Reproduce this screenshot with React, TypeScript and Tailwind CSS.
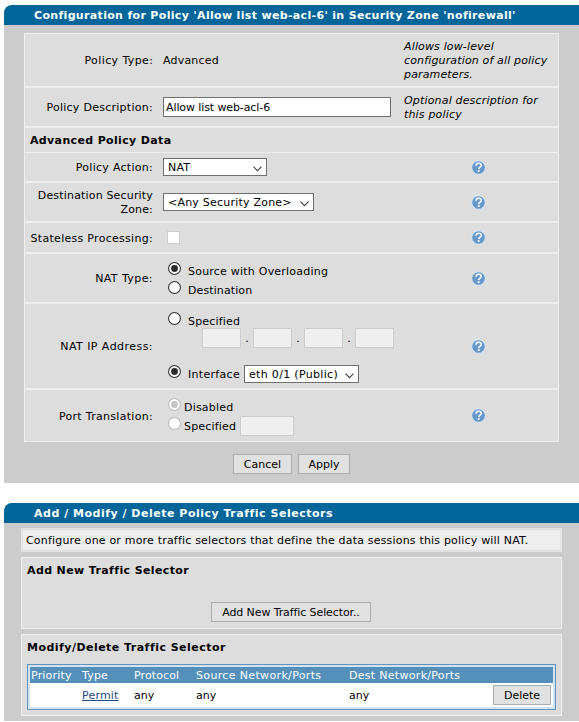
import type { ReactNode } from "react";

function Header({ children, spacing }: { children: ReactNode; spacing: string }) {
  return (
    <div className="h-5 rounded-tl-[8px] bg-[#006699] pl-[30px] text-[11px] leading-[21px] font-bold text-white">
      <span className={spacing}>{children}</span>
    </div>
  );
}

function HelpIcon() {
  return (
    <svg className="ml-[68px] block" width="15" height="15" viewBox="0 0 15 15" aria-hidden="true">
      <circle cx="7.5" cy="7.5" r="7.2" fill="#d3e6f6" />
      <circle cx="7.5" cy="7.5" r="6.3" fill="#6698ca" />
      <path d="M5 5.7C5.1 4.1 6.2 3.2 7.7 3.2c1.5 0 2.6.8 2.6 2.1 0 1.9-2.5 1.9-2.6 3.8" fill="none" stroke="#fff" strokeWidth="1.6" />
      <rect x="6.8" y="10.2" width="1.8" height="1.8" fill="#fff" />
    </svg>
  );
}

function Radio({ checked = false, disabled = false }: { checked?: boolean; disabled?: boolean }) {
  const color = disabled ? "#bcbcbc" : "#333333";
  return (
    <svg className="ml-[5px] block shrink-0" width="13" height="13" viewBox="0 0 13 13" aria-hidden="true">
      <circle cx="6.5" cy="6.5" r="5.95" fill="#fff" stroke={color} strokeWidth="1.1" />
      {checked && <circle cx="6.5" cy="6.5" r="3.4" fill={disabled ? "#c4c4c4" : "#2b2b2b"} />}
    </svg>
  );
}

function Select({ children, width, spacing }: { children: ReactNode; width: string; spacing: string }) {
  return (
    <div className={`flex h-[18px] items-center justify-between border border-[#6f6f6f] bg-white pr-[4px] pl-[4px] leading-4 ${width}`}>
      <span className={`pt-[2px] ${spacing}`}>{children}</span>
      <svg className="mt-[3px]" width="9" height="6" viewBox="0 0 9 6" aria-hidden="true">
        <path d="M.5.7 4.5 4.7 8.5.7" fill="none" stroke="#444" strokeWidth="1.1" />
      </svg>
    </div>
  );
}

function Button({ children, width }: { children: ReactNode; width: string }) {
  return (
    <button className={`flex h-5 items-center justify-center border border-[#adadad] bg-[#e1e1e1] pt-[2px] text-[11px] leading-[18px] text-black ${width}`}>
      {children}
    </button>
  );
}

function Row({ label, height, spacing, help, children }: { label: string; height: string; spacing: string; help?: ReactNode; children: ReactNode }) {
  return (
    <div className={`flex items-center border-b-2 border-[#eeeeee] last:border-b-0 ${height}`}>
      <div className="w-[128px] shrink-0 pt-[2px] text-right">
        <span className={spacing}>{label}</span>
      </div>
      <div className="ml-[10px] w-[240px] shrink-0">{children}</div>
      <div className="flex-1">{help ?? <HelpIcon />}</div>
    </div>
  );
}

function Octet() {
  return <div className="h-5 w-[39px] border border-[#cccccc] bg-[#efefef]" />;
}

function Dot() {
  return <span className="w-3 pt-[4px] text-center">.</span>;
}

export default function App() {
  return (
    <div className="h-[722px] w-[579px] overflow-hidden bg-white pt-[5px] pl-1 font-['Verdana','DejaVu_Sans',sans-serif] text-[11px] leading-[14px] whitespace-nowrap text-black">
      <section className="h-[478px] rounded-tl-[8px] bg-[#cccccc]">
        <Header spacing="tracking-[0.33px]">Configuration for Policy 'Allow list web-acl-6' in Security Zone 'nofirewall'</Header>
        <div className="mt-2 ml-5 w-[535px] border border-[#eeeeee] bg-[#dddddd]">
          <Row
            label="Policy Type:"
            height="h-[54px]"
            spacing="tracking-[0.4px] -mr-[0.4px]"
            help={<div className="pt-[2px] pl-px tracking-[0.15px] italic">Allows low-level<br />configuration of all policy<br />parameters.</div>}
          >
            <div className="pt-[2px] tracking-[0.2px]">Advanced</div>
          </Row>
          <Row
            label="Policy Description:"
            height="h-[40px]"
            spacing="tracking-[0.27px]"
            help={<div className="pt-[2px] pl-px tracking-[0.17px] italic">Optional description for<br />this policy</div>}
          >
            <div className="h-5 w-[228px] border border-[#6f6f6f] bg-white pl-[2px] leading-[19px] tracking-[-0.1px]">Allow list web-acl-6</div>
          </Row>
          <div className="h-[25px] border-b border-[#eeeeee] pl-[5px] leading-[25px] font-bold tracking-[0.35px]">Advanced Policy Data</div>
          <Row label="Policy Action:" height="h-[30px]" spacing="tracking-[0.28px]">
            <Select width="w-[104px]" spacing="tracking-[0.2px]">NAT</Select>
          </Row>
          <Row label="Destination Security Zone:" height="h-[40px] [&>div:first-child]:whitespace-normal" spacing="tracking-[0.17px]">
            <Select width="w-[151px]" spacing="tracking-[0.22px]">&lt;Any Security Zone&gt;</Select>
          </Row>
          <Row label="Stateless Processing:" height="h-[31px]" spacing="tracking-[0.29px]">
            <div className="ml-1 h-[13px] w-[13px] border border-[#cccccc] bg-white" />
          </Row>
          <Row label="NAT Type:" height="h-[50px]" spacing="tracking-[0.42px]">
            <div className="pt-[6px]">
              <div className="flex h-[19px] items-start">
                <Radio checked />
                <span className="mt-[3px] ml-[7px] tracking-[0.22px]">Source with Overloading</span>
              </div>
              <div className="flex h-[19px] items-start">
                <Radio />
                <span className="mt-[3px] ml-[7px] tracking-[0.1px]">Destination</span>
              </div>
            </div>
          </Row>
          <Row label="NAT IP Address:" height="h-[86px]" spacing="tracking-[0.45px]">
            <div className="pt-[3px]">
              <div className="flex h-4 items-start">
                <Radio />
                <span className="mt-[3px] ml-[7px] tracking-[0.17px]">Specified</span>
              </div>
              <div className="ml-[39px] flex h-[37px] items-start">
                <Octet />
                <Dot />
                <Octet />
                <Dot />
                <Octet />
                <Dot />
                <Octet />
              </div>
              <div className="flex h-[18px] items-start">
                <Radio checked />
                <span className="mt-[3px] ml-[7px] w-[56px] tracking-[0.3px]">Interface</span>
                <Select width="w-[115px]" spacing="tracking-[0.32px]">eth 0/1 (Public)</Select>
              </div>
            </div>
          </Row>
          <Row label="Port Translation:" height="h-[51px]" spacing="tracking-[0.3px]">
            <div className="pt-[3px]">
              <div className="flex h-[19px] items-start">
                <Radio checked disabled />
                <span className="mt-[3px] ml-[3px] tracking-[0.2px]">Disabled</span>
              </div>
              <div className="flex h-[19px] items-start">
                <Radio disabled />
                <span className="mt-[3px] ml-[3px] w-[56px] tracking-[0.17px]">Specified</span>
                <div className="-mt-px h-5 w-[54px] border border-[#cccccc] bg-[#efefef]" />
              </div>
            </div>
          </Row>
        </div>
        <div className="mt-3 ml-[229px] flex gap-[6px]">
          <Button width="w-[59px]">Cancel</Button>
          <Button width="w-[52px]">Apply</Button>
        </div>
      </section>

      <section className="mt-5 h-[218px] rounded-tl-[8px] bg-[#cccccc]">
        <Header spacing="tracking-[0.51px]">Add / Modify / Delete Policy Traffic Selectors</Header>
        <div className="mt-[5px] ml-[17px] flex w-[541px] flex-col gap-[5px]">
          <div className="h-6 border-2 border-[#e3e3e3] bg-[#eeeeee] pl-[3px] leading-[21px] tracking-[0.19px]">Configure one or more traffic selectors that define the data sessions this policy will NAT.</div>
          <div className="h-[72px] border border-[#eeeeee] bg-[#dddddd] pt-[6px]">
            <div className="pl-[5px] font-bold tracking-[0.38px]">Add New Traffic Selector</div>
            <div className="mt-[24px] flex justify-center pr-px">
              <Button width="w-[160px] tracking-[-0.1px]">Add New Traffic Selector..</Button>
            </div>
          </div>
          <div className="h-[82px] border border-[#eeeeee] bg-[#dddddd] pt-[6px] pl-[5px]">
            <div className="font-bold tracking-[0.47px]">Modify/Delete Traffic Selector</div>
            <div className="mt-[9px] h-[46px] w-[529px] border border-[#5f93bd] bg-[#d3e3f1] px-[2px] pt-[2px]">
              <div className="grid h-4 grid-cols-[51px_52px_62px_153px_1fr] bg-[#5590ba] pl-px leading-[17px] text-white">
                <span className="tracking-[0.2px]">Priority</span>
                <span className="tracking-[0.2px]">Type</span>
                <span className="tracking-[0.12px]">Protocol</span>
                <span className="tracking-[0.35px]">Source Network/Ports</span>
                <span className="tracking-[0.3px]">Dest Network/Ports</span>
              </div>
              <div className="grid h-6 grid-cols-[51px_52px_62px_153px_1fr_60px] items-center bg-white pl-px">
                <span />
                <span className="pt-[2px] tracking-[0.2px] text-[#1b4b8a] underline">Permit</span>
                <span className="pt-[2px]">any</span>
                <span className="pt-[2px]">any</span>
                <span className="pt-[2px]">any</span>
                <Button width="w-[58px]">Delete</Button>
              </div>
            </div>
          </div>
        </div>
      </section>
    </div>
  );
}
